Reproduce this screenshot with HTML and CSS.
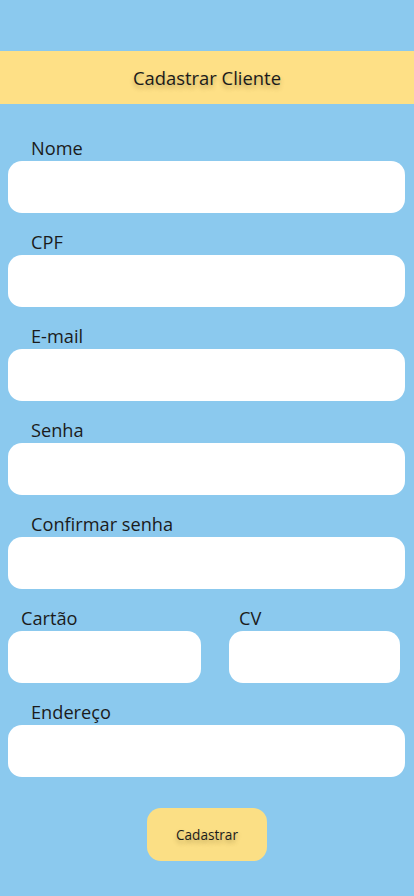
FILE: index.html
```html
<!DOCTYPE html>
<html lang="pt-BR">
<head>
<meta charset="utf-8">
<title>Cadastrar Cliente</title>
<link rel="stylesheet" href="styles.css">
</head>
<body>
<header class="topbar"><h1 class="title">Cadastrar Cliente</h1></header>
<form class="form">
  <div class="field"><label class="label">Nome</label><input class="input" type="text"></div>
  <div class="field"><label class="label">CPF</label><input class="input" type="text"></div>
  <div class="field"><label class="label">E-mail</label><input class="input" type="text"></div>
  <div class="field"><label class="label">Senha</label><input class="input" type="password"></div>
  <div class="field"><label class="label">Confirmar senha</label><input class="input" type="password"></div>
  <div class="row">
    <div class="field card"><label class="label label-card">Cartão</label><input class="input" type="text"></div>
    <div class="field cv"><label class="label label-cv">CV</label><input class="input" type="text"></div>
  </div>
  <div class="field"><label class="label">Endereço</label><input class="input" type="text"></div>
  <div class="actions"><button class="btn" type="button">Cadastrar</button></div>
</form>
</body>
</html>
```
FILE: styles.css
```css
html, body {
  margin: 0;
  padding: 0;
  background: #8bc9ee;
  font-family: "Open Sans", "DejaVu Sans", sans-serif;
  color: #1b1b1b;
}
body {
  width: 414px;
  height: 896px;
  overflow: hidden;
}
.topbar {
  margin-top: 51px;
  height: 53px;
  background: #fee086;
  display: flex;
  align-items: center;
  justify-content: center;
}
.title {
  margin: 0;
  font-size: 18.4px;
  font-weight: 400;
  text-shadow: 0 3px 4px rgba(120, 100, 40, 0.45);
}
.form {
  padding: 33px 9px 0 8px;
  display: flex;
  flex-direction: column;
}
.field {
  display: flex;
  flex-direction: column;
  margin-bottom: 18px;
}
.label {
  display: block;
  height: 22px;
  line-height: 22px;
  font-size: 18.2px;
  padding-left: 23px;
  margin-bottom: 2px;
}
.input {
  box-sizing: border-box;
  height: 52px;
  width: 100%;
  border: none;
  border-radius: 14px;
  background: #ffffff;
  outline: none;
  padding: 0 14px;
  font-size: 16px;
}
.row {
  display: flex;
  gap: 28px;
}
.card { width: 193px; }
.cv { width: 171px; }
.label-card { padding-left: 13px; }
.label-cv { padding-left: 10px; }
.actions {
  display: flex;
  justify-content: center;
  margin-top: 13px;
  padding-left: 1px;
}
.btn {
  width: 120px;
  height: 53px;
  border: none;
  border-radius: 14px;
  background: #fbdf85;
  font-family: inherit;
  font-size: 13.6px;
  color: #1b1b1b;
  text-shadow: 0 3px 4px rgba(120, 100, 40, 0.45);
  cursor: pointer;
}
```
